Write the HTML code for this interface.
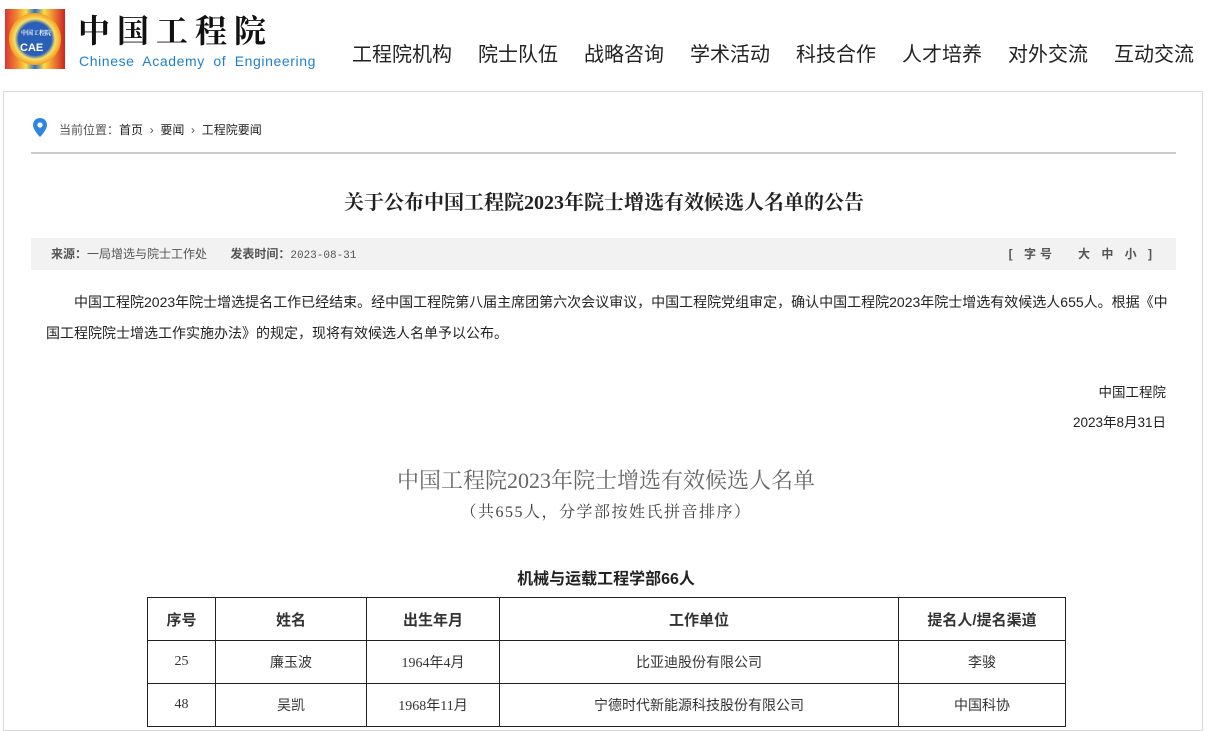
<!DOCTYPE html>
<html><head><meta charset="utf-8"><style>
*{margin:0;padding:0;box-sizing:border-box}
body{width:1208px;height:722px;overflow:hidden;background:#fff;font-family:"Liberation Sans","Noto Sans CJK SC",sans-serif;color:#333;position:relative}
.a{position:absolute;white-space:nowrap}
.nav span{position:absolute;top:38px;font-size:20px;color:#222}
table{border-collapse:collapse;position:absolute;left:147px;top:597px;font-size:14px}
td{border:1px solid #222;text-align:center;height:43px;font-family:"Liberation Serif","Noto Sans CJK SC",sans-serif;vertical-align:middle}
tr.h td{font-weight:bold;font-size:15px;font-family:"Liberation Sans","Noto Sans CJK SC",sans-serif}
</style></head><body>
<div class="a" style="left:5px;top:9px;width:60px;height:60px;background:linear-gradient(90deg,#d33 0%,#e83 20%,#fd4 35%,#2a6fc9 50%,#fd4 65%,#e83 80%,#c22 100%)">
<div style="position:absolute;left:4px;top:4px;width:52px;height:52px;border-radius:50%;background:radial-gradient(circle,#2a5fb8 0,#2a5fb8 45%,#f5e06a 55%,#f4a020 70%,#e04020 100%)"></div>
<div style="position:absolute;left:15px;top:33px;font:bold 11px 'Liberation Sans';color:#fff">CAE</div>
<div style="position:absolute;left:16px;top:19px;font:bold 6px 'Noto Serif CJK SC';color:#fff">中国工程院</div></div>
<div class="a" style="left:78px;top:6px;font:bold 32px 'Noto Serif CJK SC',serif;letter-spacing:7px;color:#111">中国工程院</div>
<div class="a" style="left:79px;top:53px;font-size:14px;color:#1e7fd0;letter-spacing:0.6px;word-spacing:4px">Chinese Academy of Engineering</div>
<div class="nav"><span style="left:352px">工程院机构</span><span style="left:478px">院士队伍</span><span style="left:584px">战略咨询</span><span style="left:690px">学术活动</span><span style="left:796px">科技合作</span><span style="left:902px">人才培养</span><span style="left:1008px">对外交流</span><span style="left:1114px">互动交流</span></div>
<div class="a" style="left:3px;top:91px;width:1200px;height:640px;border:1px solid #d8d8d8"></div>
<svg class="a" style="left:33px;top:118px" width="14" height="19" viewBox="0 0 14 19"><path d="M7 0C3 0 0 3 0 7c0 5 7 12 7 12s7-7 7-12C14 3 11 0 7 0z" fill="#2f86e0"/><circle cx="7" cy="7" r="2.6" fill="#fff"/></svg>
<div class="a" style="left:59px;top:121px;font-size:12px;color:#555">当前位置：<span style="color:#222">首页</span> &nbsp;›&nbsp; <span style="color:#222">要闻</span> &nbsp;›&nbsp; <span style="color:#222">工程院要闻</span></div>
<div class="a" style="left:31px;top:152px;width:1145px;height:2px;background:#ccc"></div>
<div class="a" style="left:0;width:1208px;text-align:center;top:186px;font:bold 20px 'Liberation Serif','Noto Serif CJK SC',serif;color:#222">关于公布中国工程院2023年院士增选有效候选人名单的公告</div>
<div class="a" style="left:31px;top:238px;width:1145px;height:32px;background:#f2f2f2;font-size:12px;color:#555;line-height:32px;padding-left:20px">
<b>来源：</b>一局增选与院士工作处 &nbsp; &nbsp; &nbsp; <b>发表时间：</b><span style="font-family:'Liberation Mono';font-size:11px">2023-08-31</span>
<span style="position:absolute;right:20px;top:0;letter-spacing:4px"><b>[ 字号 &nbsp; 大 中 小 ]</b></span></div>
<div class="a" style="left:46px;top:287px;width:1122px;white-space:normal;font-size:14px;line-height:31px;color:#222;text-indent:28px">中国工程院2023年院士增选提名工作已经结束。经中国工程院第八届主席团第六次会议审议，中国工程院党组审定，确认中国工程院2023年院士增选有效候选人655人。根据《中国工程院院士增选工作实施办法》的规定，现将有效候选人名单予以公布。</div>
<div class="a" style="right:42px;top:381px;font-size:13.5px;color:#222">中国工程院</div>
<div class="a" style="right:42px;top:411px;font-size:13.5px;color:#222">2023年8月31日</div>
<div class="a" style="left:0;width:1212px;text-align:center;top:464px;font:22px 'Liberation Serif','Noto Serif CJK SC',serif;color:#666">中国工程院2023年院士增选有效候选人名单</div>
<div class="a" style="left:0;width:1212px;text-align:center;top:499px;font:16px 'Liberation Serif','Noto Serif CJK SC',serif;color:#444;letter-spacing:1.5px">（共655人，分学部按姓氏拼音排序）</div>
<div class="a" style="left:0;width:1212px;text-align:center;top:565px;font-weight:bold;font-size:16px;color:#222">机械与运载工程学部66人</div>
<table>
<tr class="h"><td style="width:68px">序号</td><td style="width:151px">姓名</td><td style="width:133px">出生年月</td><td style="width:399px">工作单位</td><td style="width:167px">提名人/提名渠道</td></tr>
<tr><td>25</td><td>廉玉波</td><td>1964年4月</td><td>比亚迪股份有限公司</td><td>李骏</td></tr>
<tr><td>48</td><td>吴凯</td><td>1968年11月</td><td>宁德时代新能源科技股份有限公司</td><td>中国科协</td></tr>
</table>
</body></html>
